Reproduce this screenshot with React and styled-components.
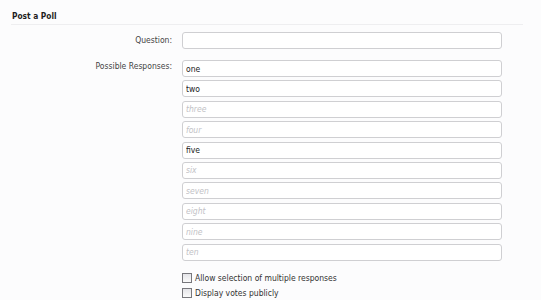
import React from 'react';
import styled, { createGlobalStyle } from 'styled-components';

const GlobalStyle = createGlobalStyle`
  html, body {
    margin: 0;
    padding: 0;
    background: #fcfcfd;
  }
  body {
    font-family: "DejaVu Sans Condensed", "Liberation Sans", Arial, sans-serif;
    color: #333;
  }
`;

const Page = styled.div`
  padding: 8px 18px 0 11px;
`;

const Title = styled.h2`
  margin: 0;
  height: 15px;
  font-size: 8.3px;
  font-weight: bold;
  line-height: 16px;
  padding-left: 1px;
  padding-bottom: 1px;
  color: #1e1e1e;
  border-bottom: 1px solid #eeeef0;
`;

const Form = styled.form`
  display: grid;
  grid-template-columns: 161px 320px;
  column-gap: 10px;
  padding-top: 7px;
`;

const Label = styled.label`
  text-align: right;
  font-size: 8.5px;
  color: #444;
  line-height: ${p => p.$top ? '12px' : '17px'};
  margin-bottom: 11px;
`;

const Field = styled.div`
  display: flex;
  flex-direction: column;
  gap: 3.4px;
  margin-bottom: ${p => p.$last ? '11px' : '10px'};
`;

const Input = styled.input`
  box-sizing: border-box;
  height: 17px;
  width: 100%;
  margin: 0;
  padding: 0 3px;
  border: 1px solid #cfcfd2;
  border-radius: 3px;
  background: #fff;
  font-family: "DejaVu Sans Condensed", "Liberation Sans", Arial, sans-serif;
  font-size: 8.5px;
  color: #222;
  outline: none;

  &::placeholder {
    color: #c2c2c6;
    font-style: italic;
  }
`;

const Options = styled.div`
  grid-column: 2;
  display: flex;
  flex-direction: column;
  gap: 3.5px;
`;

const Check = styled.label`
  display: flex;
  align-items: center;
  gap: 3px;
  font-size: 8.5px;
  line-height: 12px;
  color: #333;
`;

const Box = styled.span`
  box-sizing: border-box;
  width: 10px;
  height: 10px;
  border: 1px solid #77777c;
  background: linear-gradient(#e4e4e8, #fafafa);
`;

const responses = [
  { value: 'one' },
  { value: 'two' },
  { placeholder: 'three' },
  { placeholder: 'four' },
  { value: 'five' },
  { placeholder: 'six' },
  { placeholder: 'seven' },
  { placeholder: 'eight' },
  { placeholder: 'nine' },
  { placeholder: 'ten' },
];

export default function App() {
  return (
    <Page>
      <GlobalStyle />
      <Title>Post a Poll</Title>
      <Form>
        <Label>Question:</Label>
        <Field>
          <Input type="text" defaultValue="" />
        </Field>
        <Label $top>Possible Responses:</Label>
        <Field $last>
          {responses.map((r, i) => (
            <Input key={i} type="text" defaultValue={r.value || ''} placeholder={r.placeholder} />
          ))}
        </Field>
        <Options>
          <Check><Box />Allow selection of multiple responses</Check>
          <Check><Box />Display votes publicly</Check>
        </Options>
      </Form>
    </Page>
  );
}
